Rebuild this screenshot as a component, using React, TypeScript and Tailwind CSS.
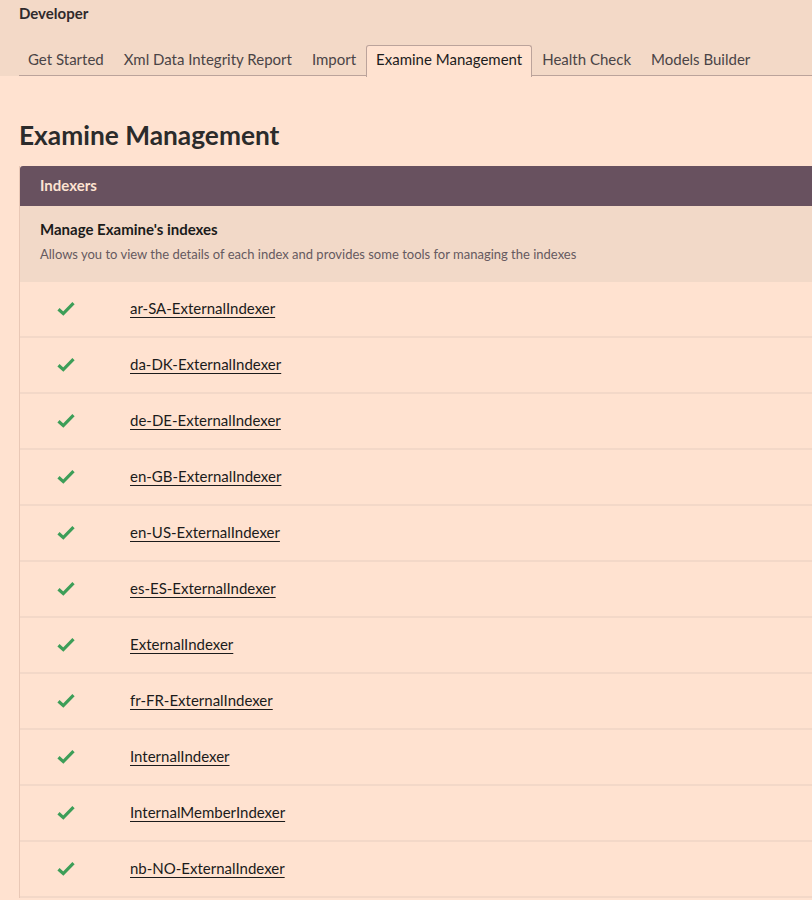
import React from "react";

const tabs = [
  "Get Started",
  "Xml Data Integrity Report",
  "Import",
  "Examine Management",
  "Health Check",
  "Models Builder",
];

const indexers = [
  "ar-SA-ExternalIndexer",
  "da-DK-ExternalIndexer",
  "de-DE-ExternalIndexer",
  "en-GB-ExternalIndexer",
  "en-US-ExternalIndexer",
  "es-ES-ExternalIndexer",
  "ExternalIndexer",
  "fr-FR-ExternalIndexer",
  "InternalIndexer",
  "InternalMemberIndexer",
  "nb-NO-ExternalIndexer",
];

function Check() {
  return (
    <svg width="18" height="15" viewBox="0 0 18 15" className="block">
      <path d="M1.5 8.2 L6.3 12.6 L16.5 2.2" fill="none" stroke="#3d9e58" strokeWidth="3.2" strokeLinejoin="miter" />
    </svg>
  );
}

export default function App() {
  return (
    <div className="min-h-[900px] w-[812px] overflow-hidden bg-[#ffe2d0] text-[#2b2b2b]" style={{ fontFamily: "Lato, 'Noto Sans', sans-serif" }}>
      <div className="bg-[#f3d9c7]">
        <div className="h-[45px] pl-[19px] pt-[3px] text-[15px] font-bold leading-[20px] text-[#2f2a2c]">Developer</div>
        <div className="ml-[19px] flex h-[31px] border-b border-[#bba39b]">
          {tabs.map((t, i) => {
            const active = t === "Examine Management";
            return (
              <div
                key={t}
                className={
                  active
                    ? "-mb-px flex h-[32px] items-center rounded-t-[3px] border border-b-0 border-[#bba39b] bg-[#ffe2d0] px-[9px] pb-[4px] text-[15px] text-[#1c1c1c]"
                    : i === 0
                    ? "flex items-center pl-[9px] pr-[10px] pb-[1px] text-[15px] text-[#4a4446]"
                    : "flex items-center px-[10px] pb-[1px] text-[15px] text-[#4a4446]"
                }
              >
                {t}
              </div>
            );
          })}
        </div>
      </div>
      <div className="pl-[19px]">
        <h1 className="pt-[43px] pb-[15px] text-[26.3px] font-bold leading-[32px] text-[#2b2b2b]">Examine Management</h1>
        <div className="w-[820px] border-l border-[#e9c8b6]">
          <div className="flex h-[40px] items-center rounded-tl-[3px] bg-[#68515f] pb-[2px] pl-[20px] text-[15px] font-bold text-[#fde3d2]">Indexers</div>
          <div className="h-[76px] bg-[#f2d9c8] pl-[20px] pt-[14px]">
            <div className="text-[15px] font-bold leading-[18px] text-[#1b1b1b]">Manage Examine's indexes</div>
            <div className="mt-[8px] text-[13px] leading-[16px] text-[#665a60]">
              Allows you to view the details of each index and provides some tools for managing the indexes
            </div>
          </div>
          {indexers.map((name) => (
            <div key={name} className="flex h-[56px] items-center border-b-2 border-[#f3d8c8] pb-[2px]">
              <div className="flex w-[110px] justify-start pl-[37px] pt-[1px]">
                <Check />
              </div>
              <a href="#" className="text-[15px] text-[#1b1b1b] underline underline-offset-[3px]">
                {name}
              </a>
            </div>
          ))}
        </div>
      </div>
    </div>
  );
}
